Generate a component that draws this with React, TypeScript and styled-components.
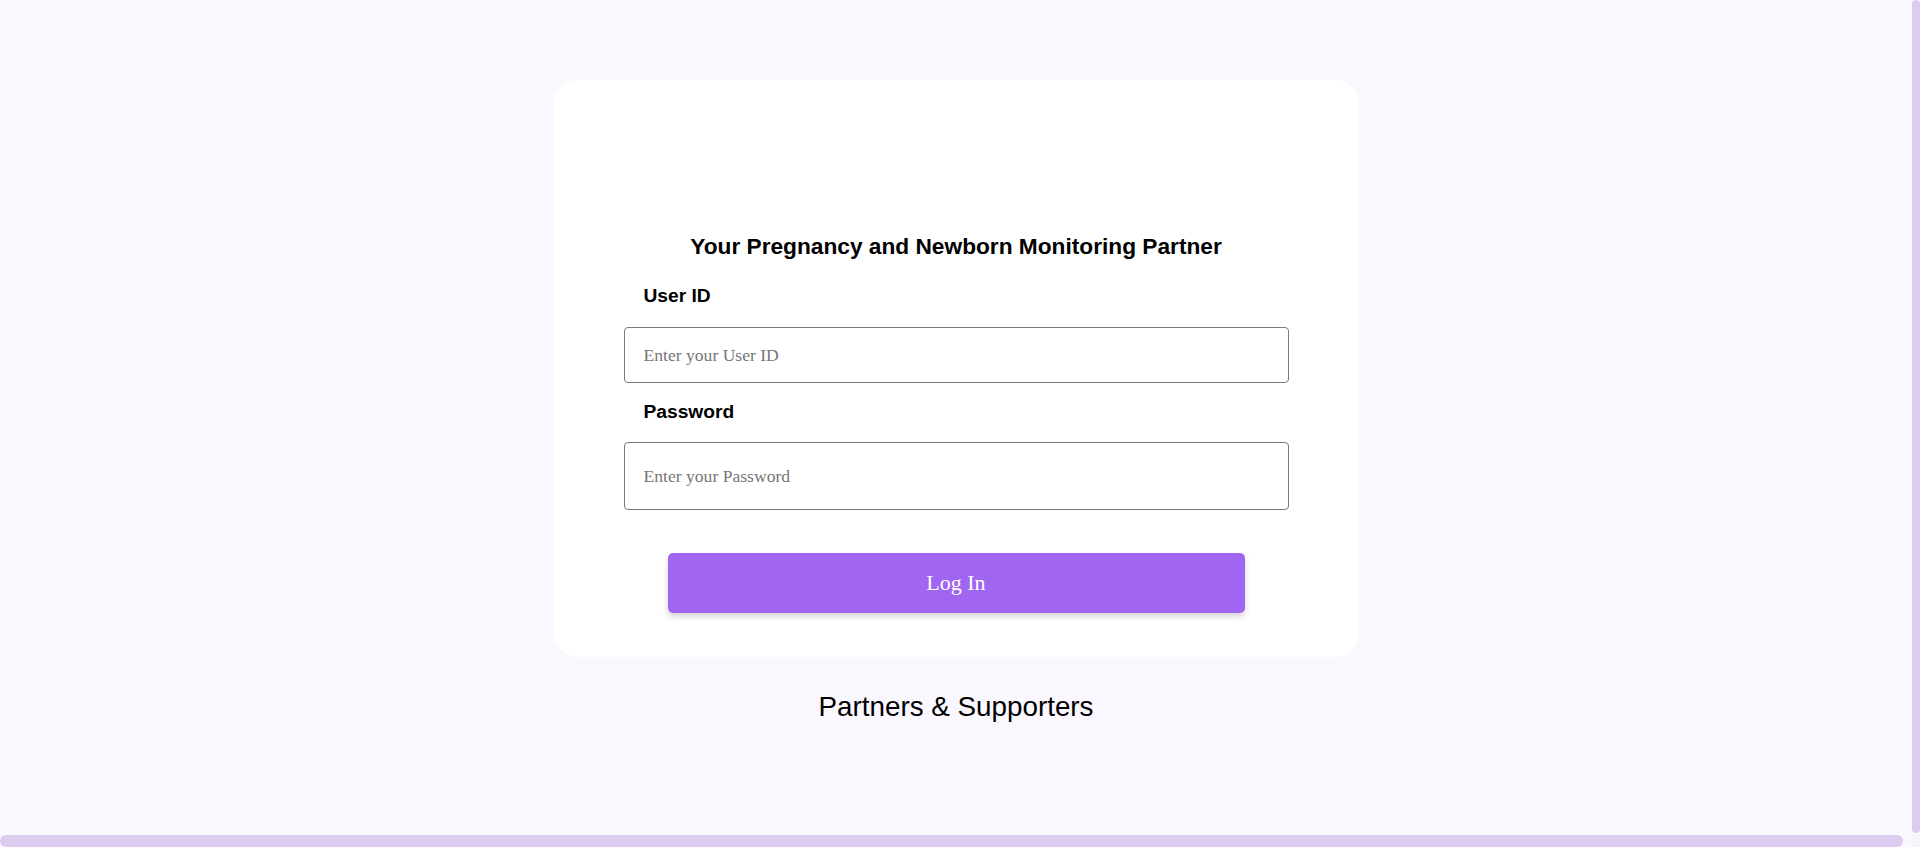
import React, { useState } from 'react'
import styled, { createGlobalStyle } from 'styled-components'

const GlobalStyle = createGlobalStyle`
  html, body {
    margin: 0;
    padding: 0;
    background: #faf7fe;
    font-family: "Liberation Serif", "Times New Roman", serif;
    color: #000;
    overflow: hidden;
  }
`

// window with the custom purple scrollbars of the original page
const Viewport = styled.div`
  display: grid;
  grid-template-columns: 1fr 8px;
  grid-template-rows: 1fr 12px;
  height: 100vh;
  background: #faf7fe;
`

const Page = styled.div`
  display: flex;
  flex-direction: column;
  align-items: center;
  padding-top: 80px;
  overflow: hidden;
`

const Rail = styled.div<{ horizontal?: boolean }>`
  display: flex;
  flex-direction: ${({ horizontal }) => (horizontal ? 'row' : 'column')};
`

const Thumb = styled.div<{ horizontal?: boolean }>`
  background: #dccdf0;
  border-radius: 6px;
  ${({ horizontal }) => (horizontal ? 'width: calc(100% - 9px); height: 100%;' : 'width: 100%; height: calc(100% - 2px);')}
`

const Corner = styled.div`
  background: #f6f3fa;
`

const Card = styled.form`
  display: flex;
  flex-direction: column;
  width: 805px;
  box-sizing: border-box;
  padding: 0 70px 44px;
  background: #ffffff;
  border-radius: 24px;
`

// the logo never shows up, it only keeps its room
const LogoSpace = styled.div`
  height: 153px;
`

const Title = styled.h2`
  margin: 0 0 26px;
  font-family: "Liberation Sans", Arial, sans-serif;
  font-size: 22.7px;
  line-height: 26px;
  font-weight: bold;
  text-align: center;
`

const Label = styled.label`
  display: block;
  padding-left: 20px;
  font-family: "Liberation Sans", Arial, sans-serif;
  font-size: 19.2px;
  line-height: 22px;
  font-weight: bold;
`

const Field = styled.div<{ gap: number }>`
  display: flex;
  flex-direction: column;
  gap: ${({ gap }) => gap}px;
  margin-bottom: 18px;
`

const Input = styled.input<{ tall?: boolean }>`
  height: ${({ tall }) => (tall ? 68 : 56)}px;
  box-sizing: border-box;
  padding: 0 19px;
  border: 1px solid #7a7a7a;
  border-radius: 4px;
  font-family: "Liberation Serif", "Times New Roman", serif;
  font-size: 17.6px;
  outline: none;

  &::placeholder {
    color: #767676;
  }
`

const Button = styled.button`
  align-self: center;
  width: 577px;
  height: 60px;
  margin-top: 25px;
  border: none;
  border-radius: 5px;
  background: #a166f1;
  color: #ffffff;
  font-family: "Liberation Serif", "Times New Roman", serif;
  font-size: 22px;
  box-shadow: 0 4px 6px rgba(0, 0, 0, 0.16);
  cursor: pointer;
`

const Partners = styled.h3`
  margin: 34px 0 0;
  font-family: "Liberation Sans", Arial, sans-serif;
  font-size: 27.8px;
  line-height: 32px;
  font-weight: normal;
`

export default function App() {
  const [userId, setUserId] = useState('')
  const [password, setPassword] = useState('')

  return (
    <>
      <GlobalStyle />
      <Viewport>
        <Page>
          <Card onSubmit={e => e.preventDefault()}>
            <LogoSpace />
            <Title>Your Pregnancy and Newborn Monitoring Partner</Title>

            <Field gap={20}>
              <Label htmlFor="user-id">User ID</Label>
              <Input
                id="user-id"
                placeholder="Enter your User ID"
                value={userId}
                onChange={e => setUserId(e.target.value)}
              />
            </Field>

            <Field gap={19}>
              <Label htmlFor="password">Password</Label>
              <Input
                id="password"
                type="password"
                tall
                placeholder="Enter your Password"
                value={password}
                onChange={e => setPassword(e.target.value)}
              />
            </Field>

            <Button type="submit">Log In</Button>
          </Card>

          <Partners>Partners &amp; Supporters</Partners>
        </Page>

        <Rail>
          <Thumb />
        </Rail>
        <Rail horizontal>
          <Thumb horizontal />
        </Rail>
        <Corner />
      </Viewport>
    </>
  )
}
